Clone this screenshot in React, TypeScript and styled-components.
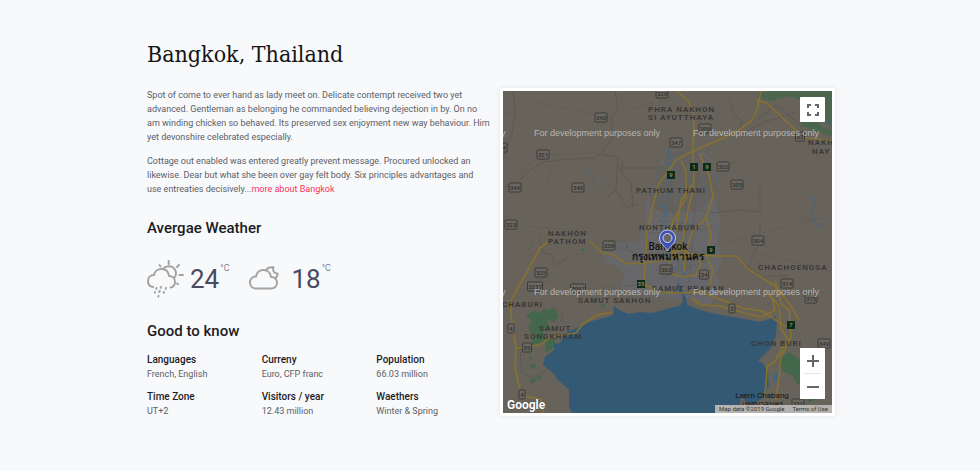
import React from "react";
import styled, { createGlobalStyle } from "styled-components";

const GlobalStyle = createGlobalStyle`
  *, *::before, *::after { box-sizing: border-box; }
  body {
    margin: 0;
    background: #f8f9fb;
    color: #5c6067;
    font-family: Roboto, "Liberation Sans", sans-serif;
    font-size: 9px;
    line-height: 14px;
  }
  h1, h2, p, dl, dt, dd { margin: 0; }
`;

const Page = styled.main`
  max-width: 690px;
  margin: 0 auto;
  padding: 37px 0 48px 2px;
`;

const Title = styled.h1`
  margin-bottom: 17px;
  color: #151515;
  font-family: "DejaVu Serif Condensed", "DejaVu Serif", serif;
  font-weight: 400;
  font-size: 23px;
  line-height: 34px;
`;

const Columns = styled.div`
  display: grid;
  grid-template-columns: 1fr 1fr;

  @media (max-width: 640px) {
    grid-template-columns: 1fr;
  }
`;

const Paragraph = styled.p`
  margin-bottom: 10px;
`;

const MoreLink = styled.a`
  color: #f9325c;
  text-decoration: none;
`;

const Heading = styled.h2<{ $top: number }>`
  margin-top: ${({ $top }) => $top}px;
  color: #1c1c1f;
  font-weight: 500;
  font-size: 15px;
  line-height: 20px;
`;

const WeatherRow = styled.div`
  display: flex;
  gap: 19px;
  margin-top: 21px;
`;

const WeatherItem = styled.div`
  display: flex;
  align-items: center;
  gap: 5px;
`;

const WeatherIcon = styled.svg`
  width: 38px;
  height: 40px;
  fill: none;
  stroke: #a3a3a3;
  stroke-width: 2;
  stroke-linecap: round;
  stroke-linejoin: round;
`;

const Temperature = styled.span`
  display: flex;
  align-items: flex-start;
  color: #474a60;
  font-size: 26px;
  line-height: 40px;
`;

const Unit = styled.sup`
  margin-left: 1px;
  font-weight: 300;
  font-size: 9px;
  line-height: 18px;
`;

const Facts = styled.dl`
  display: grid;
  grid-template-columns: repeat(3, 1fr);
  row-gap: 9px;
  margin-top: 12px;
`;

const FactName = styled.dt`
  color: #1c1c1f;
  font-weight: 500;
  font-size: 10px;
`;

const MapCell = styled.div`
  padding-left: 9px;

  @media (max-width: 640px) {
    padding: 16px 0 0;
  }
`;

const MapFrame = styled.section`
  display: flex;
  position: relative;
  border: 3px solid #fff;
  box-shadow: 0 0 5px rgba(40, 50, 70, 0.1);
`;

const MapDrawing = styled.svg`
  display: block;
  width: 100%;
  height: auto;
  background: #67635b;
  font-family: Roboto, "Noto Sans", sans-serif;
`;

const MapButton = styled.button`
  display: flex;
  align-items: center;
  justify-content: center;
  width: 25px;
  height: 25px;
  padding: 0;
  border: 0;
  border-radius: 1px;
  background: #fff;
  color: #666;
  cursor: pointer;
`;

const FullscreenSlot = styled.div`
  position: absolute;
  top: 6px;
  right: 7px;
`;

const ZoomSlot = styled.div`
  position: absolute;
  right: 7px;
  bottom: 14px;
  background: #fff;
  border-radius: 1px;
`;

const ZoomDivider = styled.div`
  height: 1px;
  margin: 0 4px;
  background: #e6e6e6;
`;

const Attribution = styled.div`
  position: absolute;
  right: 0;
  bottom: 0;
  display: flex;
  gap: 8px;
  padding: 0 4px;
  background: #b5b3b0;
  color: #333;
  font-size: 6px;
  line-height: 8px;
`;

const TermsLink = styled.a`
  color: inherit;
  text-decoration: none;
`;

const facts = [
  ["Languages", "French, English"],
  ["Curreny", "Euro, CFP franc"],
  ["Population", "66.03 million"],
  ["Time Zone", "UT+2"],
  ["Visitors / year", "12.43 million"],
  ["Waethers", "Winter & Spring"],
];

const regions: [string, number, number][] = [
  ["PHRA NAKHON", 145, 21],
  ["SI AYUTTHAYA", 145, 29],
  ["NAKH", 305, 54],
  ["NAY", 309, 63],
  ["PATHUM THANI", 133, 102],
  ["NONTHABURI", 136, 139],
  ["NAKHON", 45, 145],
  ["PATHOM", 45, 153],
  ["CHACHOENGSA", 255, 179],
  ["SAMUT PRAKAN", 149, 200],
  ["SAMUT SAKHON", 75, 212],
  ["CHABURI", -1, 216],
  ["SAMUT", 36, 240],
  ["SONGKHRAM", 21, 248],
  ["CHON BURI", 248, 255],
];

const shields: [string, number, number][] = [
  ["340", 98, 26], ["321", 40, 63], ["4", 1, 56], ["346", 12, 96],
  ["346", 75, 96], ["329", 159, 2], ["309", 202, 37], ["347", 173, 51],
  ["352", 220, 75], ["305", 234, 93], ["33", 297, 45], ["323", 8, 133],
  ["338", 106, 154], ["325", 38, 181], ["3237", 32, 195], ["3097", 75, 197],
  ["303", 163, 178], ["304", 255, 149], ["34", 201, 183], ["314", 284, 192],
  ["315", 308, 207], ["4", 8, 237], ["35", 24, 256], ["4", 19, 303],
  ["3", 229, 217], ["349", 321, 252], ["331", 295, 312],
];

const motorways: [string, number, number][] = [
  ["9", 168, 84], ["1", 191, 76], ["9", 204, 76], ["9", 208, 159],
  ["35", 138, 193], ["7", 288, 234],
];

const watermarks = [
  [31, 45], [190, 45],
  [31, 204], [190, 204],
];

function RegionMap() {
  return (
    <MapDrawing viewBox="0 0 329 322" role="img" aria-label="Map of Bangkok">
      {/* built-up area */}
      <g fill="#67676a">
        <path d="M100 152l32-1 12-14-2-24 8-12 8-32 10-4 12 2 20-6 10 10 2 38 6 20-3 22 4 18-6 14 6 16-14 16-18-8-18 2-20-6-16 2-16-8 4-14-8-8-13-4z" />
        <path fill="#64625f" d="M150 90l16-28 22-4 22 14 2 30-14 16-38 4-14-8z" />
      </g>
      {/* parks and forest */}
      <g fill="#44664a">
        <path d="M254 2l12-2h63v36l-10-6-10-22-10 2-12-5-20 5-12-4z" opacity=".75" />
        <path d="M296 26l15 3 10 8 8 2v6l-16-4-14-6z" opacity=".8" />
        <path d="M23 224l9-5 4 4 6-6 5 8-3 7 5 6-9 2 3 9-10 4-5 2 2-10-5-9 4-5z" />
        <path d="M44 219l7-2 5 7-5 8-6-5zM43 249l9-1 1 4-5 7-6 2zM27 289l5-2 1 3-5 3zM34 285l6-1-2 4-4 1zM27 274l5-1 1 4-4 1zM25 265l4 2-1 3z" />
        <path d="M276 268l10-7 10 7 6 1 1 22-9 3-4-9-11-5zM303 304l10 4-7 4zM96 215l6-2-1 3z" />
        <path d="M79 158h3v2h-3zM122 155l3-1v3z" />
      </g>
      {/* sea and lower Chao Phraya */}
      <path
        fill="#345975"
        d="M69 322l-3-6v-17l-5-5-6-5-5-7-10-8 2-8 9-7v-7l2 1 4-1 7-11 12-5 13-6 12-3 9-3 1-9 5 4 9 4 12-2 12 1 18-5 9-2 4-4-1-7-5-6 1-7 4 8 4 8 1 7 8 3 12 4 20 4 12 2 20 4 8-2 8-4 2 6-1 14-4 10-3 4-11 11 5 2 5 10 1 12-6 13-8 5-9-1-4-5-1-4-1 12 4 6v10z"
      />
      <g fill="none" stroke="#416684" strokeWidth="1">
        <path d="M170 49l-4 8-1 9 3 8-4 8 3 14-3 12-5 8 3 7-5 8M173 50l7 2M160 112l4 10-4 14-6 12M186 206l-9-9-2-8 7-6-2-8-9 3-6-6M80 77l8 5M90 85l1 11M213 90l2-7M308 104l4 10-4 8 5 14 7-4M324 28l4 6" />
        <path fill="#416684" d="M271 284l3-3 1 7-4 3z" />
      </g>
      {/* provincial borders */}
      <path
        fill="none"
        stroke="#56534f"
        strokeWidth="1"
        strokeDasharray="2 1"
        d="M10 0l2 22-3 20-8 24M112 0l3 17-7 10 2 18-9 14-8 8-25 1-28 3-20 13-6 10-12 2M100 64l15 2-2 32-8 8M120 70l-1 12 9 10 2 22M115 77h45M208 122l28-3 22 2M257 96v24M257 130v20l-12 26 15 10 26-2M226 8l4 14 9 8-3 10M239 43l22-12 31-9M255 28l18-14 22 18 8 13M36 146l4 16 10 2 1 10 12-5M112 98l12 18 10-3M46 212l14 10-2 10M17 258l2 24 10 5 16-9M31 152l-8 8"
      />
      <g fill="none" stroke="#625f59" strokeWidth="1">
        <path d="M0 24l34-12 24 4 42 10 50-14M0 98l38-34 52-2 50-28M20 135l72 6 28-26M58 168l50-14 38 12M220 76l110-40M232 96l96 42M212 154l110-28M246 160l82 20M0 180l44 10 32 8 60-4M260 214l66-14M52 60l-8 38M155 130l55 6M142 150l70 16M168 88l8 90M182 86l2 94M195 80l-9 112M150 118l58 2M148 142l56-4M156 188l50-20" />
      </g>
      {/* highways */}
      <g fill="none" stroke="#87712f" strokeWidth="1.6" strokeLinejoin="round">
        <path d="M258 0l-4 19-5 10-13 10-16 8-34 15-13 7-9 13-8 10-5 18-7 32-1 18-2 32 12 9 22 1 24-1 20 8 20 8 20 3 24 16" />
        <path d="M174 0l12 11 5 13-1 38M254 10l10 2 36 34 4 1 25 3" />
        <path d="M190 61l1 30-13 18-3 20-4 20M178 70l5 10v27l-14 25-4 23 11 11 22-2 14 1h22l10 12 28 18 16 20 8 14" />
        <path d="M196 62l10 21 4 23-7 20 5 18-4 22 6 14-4 18M204 126l-14 14-7 20-2 20M191 94l-7 29-4 26-12 19-4 12 14 6 15-2 5-11-7-9-12-5-12 4" />
        <path d="M8 210l5-10 11-19 13-24 8-6M87 150l12 12 10 1 15 10 28-2 12-3 22-6M6 209l2 10 1 14 4 24-1 20 6 28 20 3 2 14M13 257l24-3 10-8 26-4 6-8 15-10 16-3" />
        <path d="M189 208l10 6 18 1 24 7 18 4 13-7-2-10-8-10M272 190l7 24 7 5 2 28-8 9-8 14-8 6-1 18-2 12M267 204l9 11 2 22 8 14-8 14-2 20-3 24" />
      </g>

      <g fill="#383736" fontSize="8" fontWeight="600" letterSpacing="1">
        {regions.map(([name, x, y]) => (
          <text key={`${name}${y}`} x={x} y={y}>{name}</text>
        ))}
      </g>

      <g fontSize="6" fontWeight="500" textAnchor="middle">
        {shields.map(([road, x, y]) => {
          const width = road.length * 3 + 3;
          return (
            <g key={`${x}-${y}`}>
              <rect x={x - width / 2} y={y - 4} width={width} height="9" rx="1" fill="#6b6861" stroke="#3c3b39" />
              <text x={x} y={y + 3} fill="#302f2e">{road}</text>
            </g>
          );
        })}
        {motorways.map(([road, x, y]) => (
          <g key={`${x}-${y}`}>
            <rect x={x - 4} y={y - 4} width="8" height="8" fill="#0d2c17" />
            <text x={x} y={y + 2} fill="#8c9489">{road}</text>
          </g>
        ))}
      </g>

      <g fill="#141414" fontWeight="500" textAnchor="middle">
        <text x="165" y="159" fontSize="10">Bangkok</text>
        <text x="165" y="169" fontSize="10" fontWeight="700">กรุงเทพมหานคร</text>
        <text x="259" y="307" fontSize="8" fontWeight="400">Laem Chabang</text>
        <text x="259" y="316" fontSize="8" fontWeight="400">เทศบาลนคร</text>
      </g>

      <g fill="#b9b6b1" fontFamily="Liberation Sans, sans-serif" fontSize="9">
        <text x="-2" y="45">y</text>
        <text x="-2" y="204">y</text>
        {watermarks.map(([x, y]) => (
          <text key={`${x}-${y}`} x={x} y={y}>For development purposes only</text>
        ))}
      </g>

      {/* location pin */}
      <path
        fill="#3f51b5"
        stroke="#c5cae9"
        strokeWidth="1"
        d="M164.500 160c-2-5-8-7-8-13a8 8 0 0 1 16 0c0 6-6 8-8 13z"
      />
      <circle cx="164.500" cy="147" r="4.500" fill="#666668" stroke="#d5d8ec" />

      <text x="4" y="318" fill="#fff" fontSize="12" fontWeight="700" stroke="#3b3b3b" strokeWidth=".6" paintOrder="stroke">Google</text>
    </MapDrawing>
  );
}

function RainIcon() {
  return (
    <WeatherIcon viewBox="1 0 38 40" aria-hidden="true">
      <path d="M7 28C3.500 27.500 2 25 2 22c0-3.500 2.500-6 6-6 .5-3.500 3.500-6 7.500-6s7 2.500 7.500 7c3.500 0 6 2.500 6 6 0 3.200-1.800 5-4.500 5.500" />
      <path d="M17 10c1.500-1.800 3.500-2.700 6-2.700 4 0 7 3 7 7 0 2-.7 3.700-2 5" />
      <path d="M22.700 2v3M13.500 6l1 1.500M33 6l-2 2M33.500 16H37M31 24.500l1 .6" />
      <path d="M10.500 29l-.3.800M15 28l-.3.800M20 29l-.3.800M9 33l-.2.600M13.700 32l-.5 1M18 33l-.3.800M12.500 37l-.2.600" />
    </WeatherIcon>
  );
}

function CloudIcon() {
  return (
    <WeatherIcon viewBox="0 -6 38 40" aria-hidden="true">
      <path d="M8 23.500c-3.500 0-6-2.500-6-6s2.500-6 6-6c.5-3.700 3.500-6.500 7.500-6.500s7 3 7.500 7c3.500 0 6 2.300 6 5.800s-2.500 5.700-6 5.700z" />
      <path d="M18 5c1.500-2.200 4-3.200 7.500-2.700-1.500 3 .2 6 4.200 6.500-.3 2-1.200 3.500-2.500 4.500" />
    </WeatherIcon>
  );
}

function Weather({ icon, degrees }: { icon: React.ReactNode; degrees: number }) {
  return (
    <WeatherItem>
      {icon}
      <Temperature>
        {degrees}
        <Unit>°C</Unit>
      </Temperature>
    </WeatherItem>
  );
}

export default function App() {
  return (
    <>
      <GlobalStyle />
      <Page>
        <Title>Bangkok, Thailand</Title>
        <Columns>
          <article>
            <Paragraph>
              Spot of come to ever hand as lady meet on. Delicate contempt received two yet advanced.
              Gentleman as belonging he commanded believing dejection in by. On no am&nbsp;winding chicken so
              behaved. Its preserved sex enjoyment new way behaviour. Him yet&nbsp;devonshire celebrated
              especially.
            </Paragraph>
            <Paragraph>
              Cottage out enabled was entered greatly prevent message. Procured unlocked an likewise. Dear
              but what she been over gay felt body. Six principles advantages and use&nbsp;entreaties
              decisively...<MoreLink href="#bangkok">more about Bangkok</MoreLink>
            </Paragraph>
            <Heading $top={22}>Avergae Weather</Heading>
            <WeatherRow>
              <Weather icon={<RainIcon />} degrees={24} />
              <Weather icon={<CloudIcon />} degrees={18} />
            </WeatherRow>
            <Heading $top={22}>Good to know</Heading>
            <Facts>
              {facts.map(([name, value]) => (
                <div key={name}>
                  <FactName>{name}</FactName>
                  <dd>{value}</dd>
                </div>
              ))}
            </Facts>
          </article>
          <MapCell>
            <MapFrame>
              <RegionMap />
              <FullscreenSlot>
                <MapButton type="button" aria-label="Toggle fullscreen">
                  <svg width="12" height="12" viewBox="0 0 12 12" fill="none" stroke="currentColor" strokeWidth="2">
                    <path d="M1 4V1h3M8 1h3v3M11 8v3H8M4 11H1V8" />
                  </svg>
                </MapButton>
              </FullscreenSlot>
              <ZoomSlot>
                <MapButton type="button" aria-label="Zoom in">
                  <svg width="12" height="12" viewBox="0 0 12 12" stroke="currentColor" strokeWidth="2">
                    <path d="M0 6h12M6 0v12" />
                  </svg>
                </MapButton>
                <ZoomDivider />
                <MapButton type="button" aria-label="Zoom out">
                  <svg width="12" height="12" viewBox="0 0 12 12" stroke="currentColor" strokeWidth="2">
                    <path d="M0 6h12" />
                  </svg>
                </MapButton>
              </ZoomSlot>
              <Attribution>
                <span>Map data ©2019 Google</span>
                <TermsLink href="#terms">Terms of Use</TermsLink>
              </Attribution>
            </MapFrame>
          </MapCell>
        </Columns>
      </Page>
    </>
  );
}
